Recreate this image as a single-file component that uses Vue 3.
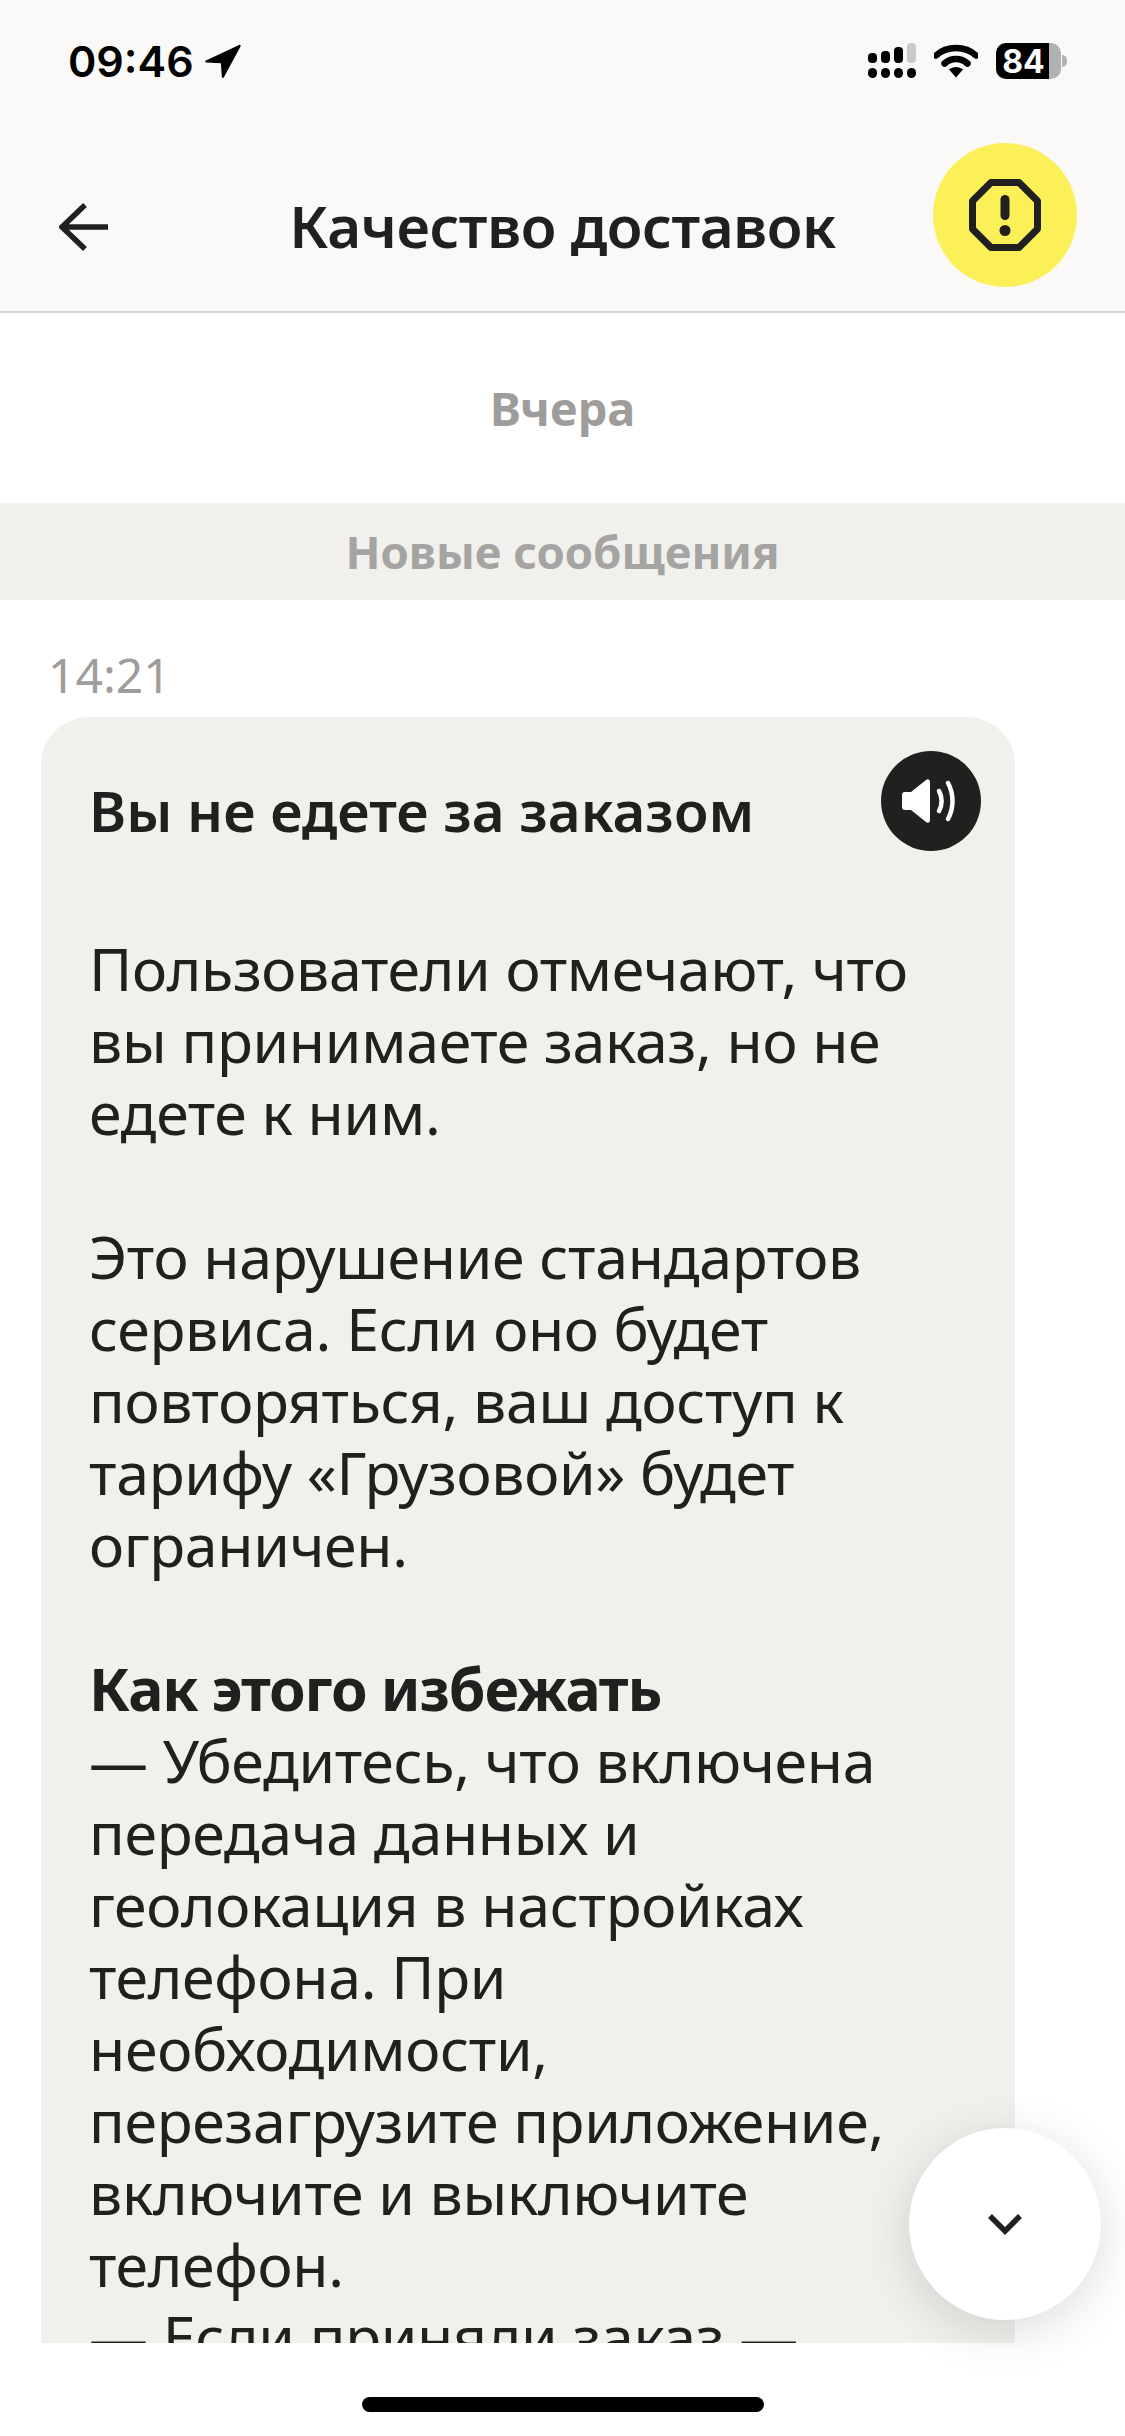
<template>
  <div class="screen">
    <header class="top">
      <div class="status-bar">
        <div class="clock">
          <span>09:46</span>
          <svg class="location" viewBox="0 0 36 34" width="36" height="34">
            <path d="M34 1 1 16.5c-1.2.7-.8 2 .5 2.1l14.4.6.9 13.6c.1 1.3 1.5 1.6 2.1.4L35.500 2.500C36 1.300 35.200.5 34 1Z" fill="#000" />
          </svg>
        </div>
        <div class="status-icons">
          <svg viewBox="0 0 48 36" width="48" height="36">
            <rect x="0" y="10" width="9" height="10" rx="4" fill="#000" />
            <rect x="13" y="8" width="9" height="12" rx="4" fill="#000" />
            <rect x="26" y="4" width="9" height="16" rx="4" fill="#000" />
            <rect x="39" y="0" width="9" height="20" rx="4" fill="#c9c9c9" />
            <rect x="0" y="25" width="9" height="10" rx="4.500" fill="#000" />
            <rect x="13" y="25" width="9" height="10" rx="4.500" fill="#000" />
            <rect x="26" y="25" width="9" height="10" rx="4.500" fill="#000" />
            <rect x="39" y="25" width="9" height="10" rx="4.500" fill="#000" />
          </svg>
          <svg viewBox="0 0 44 34" width="44" height="34">
            <path d="M2 11.500C12.500 1.500 31.500 1.500 42 11.500" fill="none" stroke="#000" stroke-width="6.500" stroke-linecap="round" />
            <path d="M10.500 19.500c6.500-6 16.500-6 23 0" fill="none" stroke="#000" stroke-width="6.500" stroke-linecap="round" />
            <path d="M15 25.500c4-3.500 10-3.500 14 0L22 33.500Z" fill="#000" />
          </svg>
          <div class="battery">
            <div class="battery-body">
              <div class="battery-level"></div>
              <span>84</span>
            </div>
            <div class="battery-nub"></div>
          </div>
        </div>
      </div>

      <div class="nav-bar">
        <button type="button" class="back-btn">
          <svg viewBox="0 0 50 48" width="50" height="48">
            <path d="M26 2 3 24l23 22M3 24h46" fill="none" stroke="#21201f" stroke-width="5.500" />
          </svg>
        </button>
        <h1>Качество доставок</h1>
        <button type="button" class="alert-btn">
          <svg viewBox="0 0 72 72" width="72" height="72">
            <path d="M22 3.500h28L68.500 22v28L50 68.500H22L3.500 50V22Z" fill="none" stroke="#21201f" stroke-width="7" stroke-linejoin="round" />
            <rect x="31.500" y="16" width="9" height="25" rx="4.500" fill="#21201f" />
            <circle cx="36" cy="51.500" r="5.500" fill="#21201f" />
          </svg>
        </button>
      </div>
    </header>

    <main class="feed">
      <p class="day">Вчера</p>
      <p class="new-band">Новые сообщения</p>
      <p class="time">14:21</p>

      <article class="bubble">
        <div class="bubble-head">
          <h2>Вы не едете за заказом</h2>
          <button type="button" class="sound-btn">
            <svg viewBox="0 0 62 46" width="62" height="46">
              <path d="M2 17c0-2 1-3 3-3h6L26 2c2-1.500 4-.5 4 2v38c0 2.500-2 3.500-4 2L11 32H5c-2 0-3-1-3-3Z" fill="#fff" />
              <path d="M39 13c3.500 6 3.500 14 0 20" fill="none" stroke="#fff" stroke-width="4.500" stroke-linecap="round" />
              <path d="M48 5c6 11 6 25 0 36" fill="none" stroke="#fff" stroke-width="4.500" stroke-linecap="round" />
            </svg>
          </button>
        </div>
        <p>Пользователи отмечают, что вы принимаете заказ, но не едете к ним.</p>
        <p>Это нарушение стандартов сервиса. Если оно будет повторяться, ваш доступ к тарифу «Грузовой» будет ограничен.</p>
        <p>
          <strong>Как этого избежать</strong><br />
          — Убедитесь, что включена передача данных и геолокация в настройках телефона. При необходимости, перезагрузите приложение, включите и выключите телефон.<br />
          — Если приняли заказ — поезжайте к клиенту сразу.
        </p>
      </article>
    </main>

    <button type="button" class="scroll-btn">
      <svg viewBox="0 0 36 22" width="36" height="22">
        <path d="M3 3l15 15L33 3" fill="none" stroke="#21201f" stroke-width="5.500" />
      </svg>
    </button>

    <footer class="home-area">
      <div class="home-bar"></div>
    </footer>
  </div>
</template>

<script setup>
</script>

<style>
html,
body {
  margin: 0;
  background: #fff;
}
</style>

<style scoped>
.screen {
  position: relative;
  display: flex;
  flex-direction: column;
  width: 1125px;
  height: 2436px;
  overflow: hidden;
  background: #fff;
  color: #21201f;
  font-family: "Noto Sans", "Open Sans", sans-serif;
}

button {
  display: flex;
  align-items: center;
  justify-content: center;
  padding: 0;
  border: none;
  background: none;
}

/* ШАПКА */
.top {
  height: 313px;
  box-sizing: border-box;
  border-bottom: 2px solid #d6d5d3;
  background: #faf9f7;
}

.status-bar {
  display: flex;
  justify-content: space-between;
  align-items: center;
  height: 36px;
  padding: 43px 58px 0 68px;
}

.clock {
  display: flex;
  align-items: center;
  gap: 11px;
  color: #000;
  font-family: Inter, sans-serif;
  font-size: 43px;
  font-weight: 600;
}

.status-icons {
  display: flex;
  align-items: center;
  gap: 18px;
}

.battery {
  display: flex;
  align-items: center;
  gap: 1px;
}

.battery-body {
  position: relative;
  display: flex;
  align-items: center;
  justify-content: center;
  width: 65px;
  height: 36px;
  overflow: hidden;
  border-radius: 10px;
  background: #b2b2b2;
}

.battery-level {
  position: absolute;
  top: 0;
  bottom: 0;
  left: 0;
  width: 53px;
  background: #000;
}

.battery-body span {
  position: relative;
  margin-right: 10px;
  color: #fff;
  font-family: Inter, sans-serif;
  font-size: 32px;
  font-weight: 700;
}

.battery-nub {
  width: 5px;
  height: 12px;
  border-radius: 0 5px 5px 0;
  background: #b2b2b2;
}

.nav-bar {
  position: relative;
  display: flex;
  justify-content: center;
  align-items: center;
  height: 144px;
  margin-top: 64px;
}

.nav-bar h1 {
  margin: 0;
  font-size: 58.500px;
  font-weight: 600;
  letter-spacing: -0.5px;
  transform: translateY(10px);
}

.back-btn {
  position: absolute;
  top: 60px;
  left: 59px;
}

.alert-btn {
  position: absolute;
  top: 0;
  right: 48px;
  width: 144px;
  height: 144px;
  border-radius: 50%;
  background: #fcf058;
}

/* ЛЕНТА */
.feed {
  flex: 1;
  min-height: 0;
  overflow: hidden;
}

.day {
  margin: 0;
  padding-top: 70px;
  color: #9e9d9b;
  font-size: 47px;
  font-weight: 700;
  line-height: 50px;
  text-align: center;
}

.new-band {
  height: 97px;
  margin: 70px 0 0;
  background: #f1f0ed;
  color: #a5a4a2;
  font-size: 45.500px;
  font-weight: 700;
  line-height: 97px;
  text-align: center;
}

.time {
  margin: 0;
  padding: 49px 0 0 48px;
  color: #9e9d9b;
  font-size: 48px;
  line-height: 52px;
}

.bubble {
  width: 974px;
  box-sizing: border-box;
  margin: 16px 0 0 41px;
  padding: 34px 34px 0 48px;
  border-radius: 48px 48px 0 0;
  background: #f1f0ed;
  font-size: 59px;
  line-height: 72px;
}

.bubble-head {
  display: flex;
  justify-content: space-between;
  align-items: flex-start;
  height: 100px;
  margin-bottom: 81px;
}

.bubble-head h2 {
  margin: 0;
  padding-top: 24px;
  font-size: 56.500px;
  font-weight: 600;
  line-height: 72px;
}

.sound-btn {
  width: 100px;
  height: 100px;
  border-radius: 50%;
  background: #21201f;
}

.bubble p {
  margin: 0 0 72px;
  padding-right: 18px;
  letter-spacing: -0.3px;
}

.bubble strong {
  font-weight: 700;
  letter-spacing: -1.100px;
}

.scroll-btn {
  position: absolute;
  top: 2128px;
  left: 909px;
  z-index: 1;
  width: 192px;
  height: 192px;
  border-radius: 50%;
  background: #fff;
  box-shadow: 0 10px 50px rgba(0, 0, 0, 0.14);
}

/* НИЖНЯЯ ПОЛОСА */
.home-area {
  height: 93px;
  background: #fff;
}

.home-bar {
  width: 402px;
  height: 15px;
  margin: 0 0 0 362px;
  border-radius: 8px;
  background: #000;
  transform: translateY(54px);
}
</style>
